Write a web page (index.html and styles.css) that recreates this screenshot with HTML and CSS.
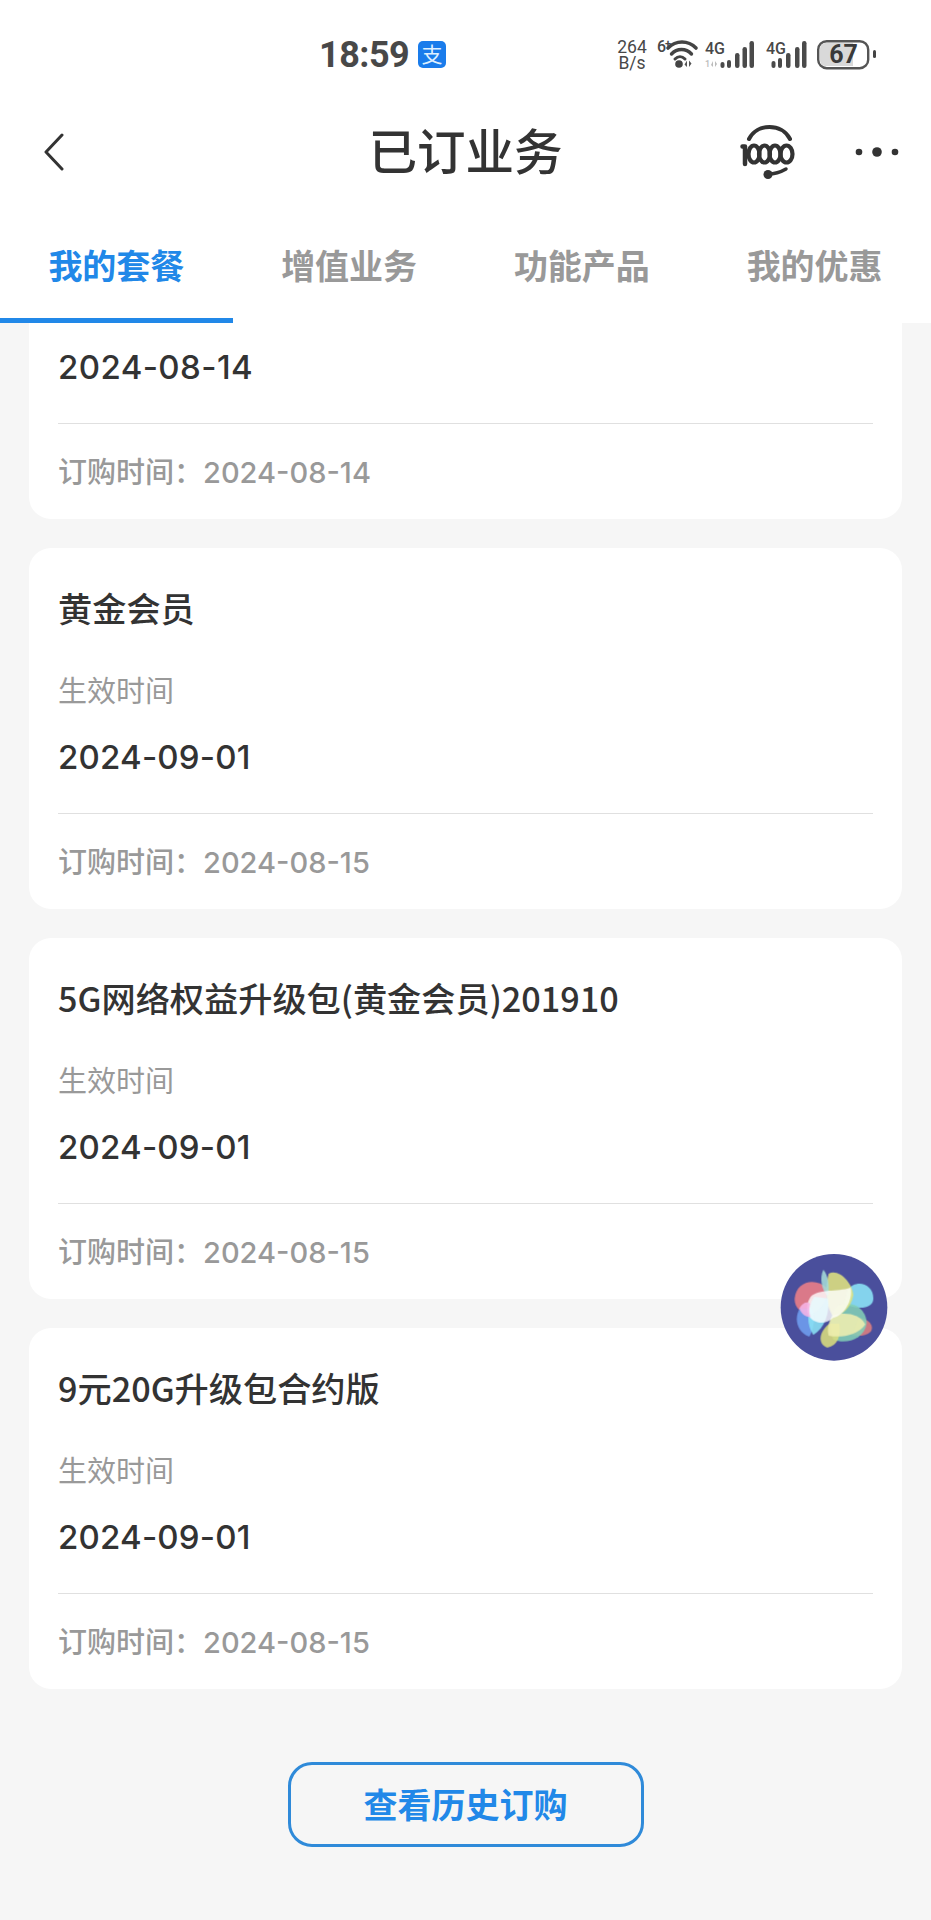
FILE: index.html
```html
<!DOCTYPE html>
<html lang="zh-CN">
<head>
<meta charset="utf-8">
<title>已订业务</title>
<link rel="stylesheet" href="styles.css">
</head>
<body>
<div class="screen">
  <header class="top">
    <div class="status">
      <span class="time">18:59</span>
      <span class="alipay">支</span>
      <span class="speed">264<br>B/s</span>
      <svg class="sys" width="290" height="50" viewBox="600 30 290 50">
        <g class="sys-text">
          <text class="sm" x="657" y="52">6</text>
          <text class="xs" x="665" y="47">+</text>
          <text class="sm" x="705" y="54">4G</text>
          <text class="sm" x="766" y="54">4G</text>
          <text class="pale" x="705" y="67">1</text>
        </g>
        <g fill="none" stroke="#444" stroke-linecap="round">
          <path d="M668 48C676 40 688 40 696 48" stroke-width="3.600"/>
          <path d="M671.500 54C677 48 686 48 691.500 54" stroke-width="3.400"/>
          <path d="M675 59C678 56 682 56 685 59" stroke-width="3"/>
        </g>
        <circle cx="679" cy="64" r="3.800" fill="#444"/>
        <path d="M687 60.500v6.500l-2.500-2.500zM689 60.500v6.500l2.500-3.500z" fill="#555"/>
        <path d="M713 61v6l-2-2zM715 61v6l2-3z" fill="#bbb"/>
        <g fill="#4a4a4a">
          <rect x="720.500" y="62" width="4" height="6" rx="2"/>
          <rect x="727" y="60" width="4" height="8" rx="2"/>
          <rect x="735" y="53" width="4.500" height="15" rx="2.200"/>
          <rect x="742.500" y="47" width="4.500" height="21" rx="2.200"/>
          <rect x="749.500" y="41" width="4.500" height="27" rx="2.200"/>
          <rect x="771.500" y="61" width="4" height="7" rx="2"/>
          <rect x="778" y="58" width="4" height="10" rx="2"/>
          <rect x="786" y="53" width="4.500" height="15" rx="2.200"/>
          <rect x="795" y="47" width="4.500" height="21" rx="2.200"/>
          <rect x="802" y="41" width="4.500" height="27" rx="2.200"/>
        </g>
        <rect x="818.200" y="41.200" width="50" height="27" rx="8.500" fill="#fff" stroke="#555" stroke-width="2.400"/>
        <path d="M825 43h28v23h-28a6 6 0 0 1-5-6v-11a6 6 0 0 1 5-6z" fill="#d9d9d9"/>
        <text class="batt" x="843.500" y="63" text-anchor="middle">67</text>
        <rect x="873" y="50" width="3" height="8" rx="1.500" fill="#444"/>
      </svg>
    </div>
    <nav class="bar">
      <svg class="back" width="22" height="38" viewBox="0 0 22 38"><path d="M19 2 3 19l16 17" fill="none" stroke="#333" stroke-width="3" stroke-linecap="round" stroke-linejoin="round"/></svg>
      <h1 class="title">已订业务</h1>
      <svg class="hotline" width="56" height="56" viewBox="0 0 56 56" role="img" aria-label="10000">
        <path d="M9 15C17 -1 42 -1 50 15" fill="none" stroke="#333" stroke-width="4" stroke-linecap="round"/>
        <path d="M2.500 22.500h2.500v17.500" fill="none" stroke="#333" stroke-width="4.500" stroke-linecap="round" stroke-linejoin="round"/>
        <g fill="none" stroke="#333" stroke-width="4.200"><ellipse cx="14" cy="30" rx="5.500" ry="8.500"/><ellipse cx="24.500" cy="30" rx="5.500" ry="8.500"/><ellipse cx="35" cy="30" rx="5.500" ry="8.500"/><ellipse cx="46.500" cy="30" rx="6" ry="8.500"/></g>
        <path d="M28 50c7 0 12-1.500 18-5" fill="none" stroke="#333" stroke-width="3.500" stroke-linecap="round"/>
        <circle cx="28" cy="50.500" r="4.500" fill="#333"/>
      </svg>
      <svg class="more" width="44" height="12" viewBox="0 0 44 12"><g fill="#333"><circle cx="4" cy="6" r="3.300"/><circle cx="22" cy="6" r="4.800"/><circle cx="40" cy="6" r="3.300"/></g></svg>
    </nav>
    <div class="tabs">
      <div class="tab active">我的套餐</div>
      <div class="tab">增值业务</div>
      <div class="tab">功能产品</div>
      <div class="tab">我的优惠</div>
    </div>
  </header>

  <main class="list">
    <section class="card clipped">
      <div class="value first-value">2024-08-14</div>
      <div class="rule"></div>
      <div class="foot">订购时间：<span class="foot-date">2024-08-14</span></div>
    </section>
    <section class="card">
      <div class="name">黄金会员</div>
      <div class="label">生效时间</div>
      <div class="value">2024-09-01</div>
      <div class="rule"></div>
      <div class="foot">订购时间：<span class="foot-date">2024-08-15</span></div>
    </section>
    <section class="card">
      <div class="name">5G网络权益升级包(黄金会员)201910</div>
      <div class="label">生效时间</div>
      <div class="value">2024-09-01</div>
      <div class="rule"></div>
      <div class="foot">订购时间：<span class="foot-date">2024-08-15</span></div>
    </section>
    <section class="card">
      <div class="name">9元20G升级包合约版</div>
      <div class="label">生效时间</div>
      <div class="value">2024-09-01</div>
      <div class="rule"></div>
      <div class="foot">订购时间：<span class="foot-date">2024-08-15</span></div>
    </section>
    <button class="history">查看历史订购</button>
  </main>

  <svg class="assistant" width="130" height="125" viewBox="0 0 390 375">
    <circle cx="192" cy="187" r="160" fill="#4a4f9c"/>
    <g class="petals">
      <path fill="#ee7f86" d="M172 130C135 95 78 110 74 160C72 190 100 212 130 205C155 195 175 160 172 130Z"/>
      <path fill="#6f9ff0" d="M90 190C72 215 78 262 118 275C132 250 136 220 128 190Z"/>
      <path fill="#8ce6f8" d="M232 135C258 100 310 115 310 160C310 192 262 196 222 176Z"/>
      <path fill="#dd7f80" d="M265 218C296 220 314 243 302 260C288 274 262 274 245 270Z"/>
      <path fill="#82cfb6" d="M198 185C245 160 290 192 290 235C284 280 230 300 190 284C174 250 180 212 198 185Z"/>
      <path fill="#dfe27f" d="M176 86C206 70 246 112 250 150C244 190 216 210 190 216C164 178 166 124 176 86Z"/>
      <path fill="#a5dcd8" d="M160 74C147 100 156 138 174 154C180 126 174 90 160 74Z"/>
      <path fill="#8ae3f5" d="M132 155C108 195 110 242 130 270C164 248 180 205 174 160Z"/>
      <path fill="#dadd7d" d="M178 236C146 260 142 298 172 308C204 302 214 270 208 236Z"/>
      <path fill="#efeeaf" d="M188 212C225 200 268 206 286 238C264 270 214 280 176 272C170 252 176 228 188 212Z"/>
      <path class="glow" fill="#ffffff" d="M122 155C148 130 200 142 242 128C250 165 222 212 190 218C165 242 128 236 114 208C108 188 112 170 122 155Z"/>
      <path fill="#f6b4e6" d="M88 190C98 172 112 168 120 176C116 195 118 208 122 216C104 216 94 205 88 190Z"/>
    </g>
  </svg>
</div>
</body>
</html>
```
FILE: styles.css
```css
* { box-sizing: border-box; }
html, body { margin: 0; padding: 0; }
body {
  background: #f6f6f6;
  font-family: "Noto Sans CJK SC", "Noto Sans", sans-serif;
  color: #333;
}
.screen {
  position: relative;
  width: 931px;
  height: 1920px;
  overflow: hidden;
  background: #f6f6f6;
}
.top { background: #fff; }

.status {
  position: relative;
  height: 100px;
  display: flex;
  align-items: center;
  padding: 9px 0 0 319px;
  color: #444;
}
.time {
  width: 89px;
  font: 700 36px/1 "Roboto", sans-serif;
  letter-spacing: -.5px;
  color: #484848;
}
.alipay {
  width: 28px;
  height: 27px;
  margin: -1px 0 0 10px;
  border-radius: 5px;
  background: #1a7ceb;
  color: #dff0ff;
  font-size: 21px;
  font-weight: 400;
  line-height: 25px;
  text-align: center;
}
.speed {
  display: block;
  width: 30px;
  margin-left: 171px;
  font: 400 17.500px/16px "Roboto", sans-serif;
  text-align: center;
  color: #484848;
  white-space: nowrap;
}
.sys { position: absolute; left: 600px; top: 30px; }
.sys-text text { font: 500 16px "Roboto", sans-serif; fill: #484848; }
.sys-text .xs { font-size: 11px; font-weight: 700; }
.sys-text .pale { font-size: 9px; fill: #bbb; }
.batt { font: 700 25px "Roboto", sans-serif; fill: #3a3a3a; }

.bar {
  position: relative;
  height: 104px;
  display: flex;
  align-items: center;
  justify-content: center;
  padding-bottom: 7px;
}
.title {
  margin: 0;
  font-size: 48.500px;
  line-height: 60px;
  font-weight: 500;
  color: #333;
}
.back { position: absolute; left: 43px; top: 33px; }
.hotline { position: absolute; left: 740px; top: 24px; }
.more { position: absolute; left: 855px; top: 46px; }

.tabs { display: flex; height: 119px; }
.tab {
  flex: 1;
  display: flex;
  align-items: center;
  justify-content: center;
  padding-top: 6px;
  border-bottom: 5px solid transparent;
  font-size: 34px;
  font-weight: 700;
  color: #999;
}
.tab.active { color: #2188e8; border-bottom-color: #2188e8; }

.list {
  display: flex;
  flex-direction: column;
  align-items: center;
  gap: 29px;
}
.card {
  width: 873px;
  height: 361px;
  padding: 39px 29px 27px;
  border-radius: 22px;
  background: #fff;
}
.card.clipped {
  height: 196px;
  padding-top: 24px;
  border-radius: 0 0 22px 22px;
}
.name {
  font-size: 34.200px;
  line-height: 40px;
  font-weight: 500;
  color: #333;
}
.label {
  margin-top: 42px;
  font-size: 29px;
  line-height: 40px;
  color: #999;
}
.value {
  margin-top: 28px;
  font: 500 33px/40px "Inter", "Noto Sans", sans-serif;
  letter-spacing: .2px;
  color: #333;
}
.first-value { margin-top: 0; letter-spacing: .4px; }
.rule { height: 1px; margin-top: 36px; background: #e0e0e0; }
.foot {
  margin-top: 26px;
  font-size: 29px;
  line-height: 40px;
  font-weight: 500;
  color: #999;
  white-space: nowrap;
}
.foot-date { font: 500 29px/40px "Inter", "Noto Sans", sans-serif; }
.history {
  width: 356px;
  height: 85px;
  margin-top: 44px;
  padding: 0 0 3px;
  border: 3px solid #2f8ad9;
  border-radius: 24px;
  background: transparent;
  font-family: "Noto Sans CJK SC", sans-serif;
  font-size: 34px;
  font-weight: 700;
  color: #2188e8;
}
.assistant { position: absolute; left: 770px; top: 1245px; }
.petals { filter: blur(.6px); }
.petals path { opacity: .88; }
.petals .glow { opacity: .8; }
```
